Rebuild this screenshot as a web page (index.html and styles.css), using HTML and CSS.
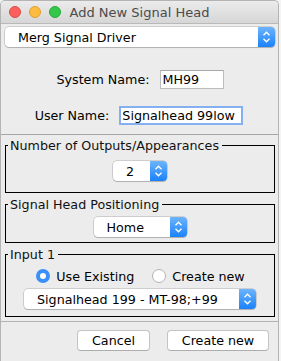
FILE: index.html
```html
<!DOCTYPE html>
<html lang="en">
<head>
  <title>Add New Signal Head</title>
  <meta charset="utf-8">
  <link rel="stylesheet" href="styles.css">
</head>
<body>
  <div class="window">
    <div class="titlebar">
      <div class="lights">
        <span class="light light-red"></span>
        <span class="light light-yellow"></span>
        <span class="light light-green"></span>
      </div>
      <span class="window-title">Add New Signal Head</span>
    </div>

    <div class="top">
      <!-- Signal head type -->
      <div class="combo combo-wide">
        <span class="combo-text">Merg Signal Driver</span>
        <span class="stepper">
          <svg width="17" height="20" viewBox="0 0 17 20"><path d="M5.5 8.2 8.5 5.2 11.5 8.2M5.5 11.8 8.5 14.8 11.5 11.8" fill="none" stroke="#fff" stroke-width="1.4"/></svg>
        </span>
      </div>

      <label class="row row-system">
        <span class="row-title">System Name:</span>
        <input class="input input-system" type="text" value="MH99">
      </label>

      <label class="row row-user">
        <span class="row-title">User Name:</span>
        <input class="input input-user input-focus" type="text" value="Signalhead 99low">
      </label>
    </div>

    <div class="panels">
      <fieldset class="group group-outputs">
        <legend>Number of Outputs/Appearances</legend>
        <div class="combo combo-spin">
          <span class="combo-text">2</span>
          <span class="stepper">
            <svg width="17" height="20" viewBox="0 0 17 20"><path d="M5.5 8.2 8.5 5.2 11.5 8.2M5.5 11.8 8.5 14.8 11.5 11.8" fill="none" stroke="#fff" stroke-width="1.4"/></svg>
          </span>
        </div>
      </fieldset>

      <fieldset class="group group-position">
        <legend>Signal Head Positioning</legend>
        <div class="combo combo-home">
          <span class="combo-text">Home</span>
          <span class="stepper">
            <svg width="17" height="20" viewBox="0 0 17 20"><path d="M5.5 8.2 8.5 5.2 11.5 8.2M5.5 11.8 8.5 14.8 11.5 11.8" fill="none" stroke="#fff" stroke-width="1.4"/></svg>
          </span>
        </div>
      </fieldset>

      <fieldset class="group group-input">
        <legend>Input 1</legend>
        <div class="radios">
          <label class="radio-label">
            <input class="radio" type="radio" name="input1" checked>
            <span>Use Existing</span>
          </label>
          <label class="radio-label">
            <input class="radio" type="radio" name="input1">
            <span>Create new</span>
          </label>
        </div>
        <div class="combo combo-head">
          <span class="combo-text">Signalhead 199 - MT-98;+99</span>
          <span class="stepper">
            <svg width="17" height="20" viewBox="0 0 17 20"><path d="M5.5 8.2 8.5 5.2 11.5 8.2M5.5 11.8 8.5 14.8 11.5 11.8" fill="none" stroke="#fff" stroke-width="1.4"/></svg>
          </span>
        </div>
      </fieldset>
    </div>

    <div class="buttons">
      <button class="button button-cancel" type="button">Cancel</button>
      <button class="button button-create" type="button">Create new</button>
    </div>
  </div>
</body>
</html>
```

FILE: styles.css
```css
*, *::before, *::after {
  box-sizing: border-box;
}

body {
  margin: 0;
  background-color: #f4f4f4;
  color: #000000;
  font-family: "DejaVu Sans", sans-serif;
  font-size: 12.7px;
}

.window {
  width: 279px;
  height: 361px;
  border: 1px solid #b4b4b4;
  border-bottom: none;
  border-radius: 5px 5px 0 0;
  background-color: #ececec;
  overflow: hidden;
}

/* title bar */

.titlebar {
  display: grid;
  grid-template-columns: 1fr auto 1fr;
  align-items: center;
  height: 23px;
  border-bottom: 1px solid #b9b9b9;
  background: linear-gradient(#ebebeb, #d6d6d6);
}

.lights {
  display: flex;
  gap: 8px;
  padding-left: 8px;
}

.light {
  width: 12px;
  height: 12px;
  border-radius: 50%;
}

.light-red {
  background-color: #fc605c;
  border: 1px solid #de4a45;
}

.light-yellow {
  background-color: #fdbc40;
  border: 1px solid #dea034;
}

.light-green {
  background-color: #34c84a;
  border: 1px solid #27aa35;
}

.window-title {
  color: #4b4b4b;
  font-size: 13px;
}

/* combo boxes */

.combo {
  display: flex;
  align-items: stretch;
  height: 20px;
  border-radius: 4px;
  background-color: #ffffff;
  box-shadow: 0 0 0 0.5px rgba(0, 0, 0, 0.25), 0 1px 1px rgba(0, 0, 0, 0.15);
}

.combo-text {
  flex: 1;
  display: flex;
  align-items: center;
  padding-left: 13px;
  white-space: nowrap;
}

.stepper {
  display: flex;
  width: 17px;
  border-radius: 0 4px 4px 0;
  background: linear-gradient(#6db4fb, #1a82fb);
}

.combo-wide {
  margin-top: 3px;
}

.combo-spin {
  width: 54px;
}

.combo-home {
  width: 93px;
}

.combo-head {
  width: 232px;
}

/* name rows */

.top {
  padding: 0 3px 0 4px;
}

.row {
  display: flex;
  align-items: center;
  justify-content: center;
  gap: 10px;
}

.row-system {
  margin-top: 23px;
}

.row-user {
  margin-top: 17px;
  padding-right: 2px;
}

.input {
  height: 19px;
  border: 1px solid #bcbcbc;
  border-top-color: #a8a8a8;
  padding: 0 2px;
  background-color: #ffffff;
  color: #000000;
  font-family: inherit;
  font-size: inherit;
  outline: none;
}

.input-system {
  width: 64px;
}

.input-user {
  width: 124px;
  padding: 0 1px;
}

.input-focus {
  border: 2px solid #84b0f1;
}

/* titled panels */

.panels {
  margin-top: 9px;
  border-top: 1px solid #a6a6a6;
  border-bottom: 1px solid #b3b3b3;
  padding: 3px 3px 4px 4px;
}

.group {
  display: flex;
  flex-direction: column;
  align-items: center;
  margin: 0;
  border: 1px solid #000000;
  padding: 0;
  min-width: 0;
}

.group + .group {
  margin-top: 4px;
}

legend {
  margin-left: 2px;
  padding: 0 3px 0 2px;
  line-height: 15px;
  color: #111111;
}

.group-outputs {
  padding: 8px 0 11px;
}

.group-position {
  padding: 5px 0 5px;
}

.group-input {
  padding: 6px 0 7px;
}

.radios {
  display: flex;
  gap: 18px;
  margin-bottom: 5px;
  padding-left: 1px;
}

.radio-label {
  display: flex;
  align-items: center;
  gap: 6px;
  height: 16px;
}

.radio {
  width: 14px;
  height: 14px;
  margin: 0;
  border: 1px solid #b3b3b3;
  border-radius: 50%;
  background-color: #ffffff;
  -webkit-appearance: none;
  appearance: none;
}

.radio:checked {
  border: 4.5px solid #3d8ff8;
  background-color: #ffffff;
}

/* buttons */

.buttons {
  display: flex;
  justify-content: flex-end;
  gap: 17px;
  padding: 8px 9px 0 0;
}

.button {
  height: 21px;
  border: 1px solid #c3c3c3;
  border-bottom-color: #adadad;
  border-radius: 4px;
  padding: 0;
  background-color: #ffffff;
  color: #000000;
  font-family: inherit;
  font-size: inherit;
}

.button-cancel {
  width: 73px;
}

.button-create {
  width: 102px;
}
```
